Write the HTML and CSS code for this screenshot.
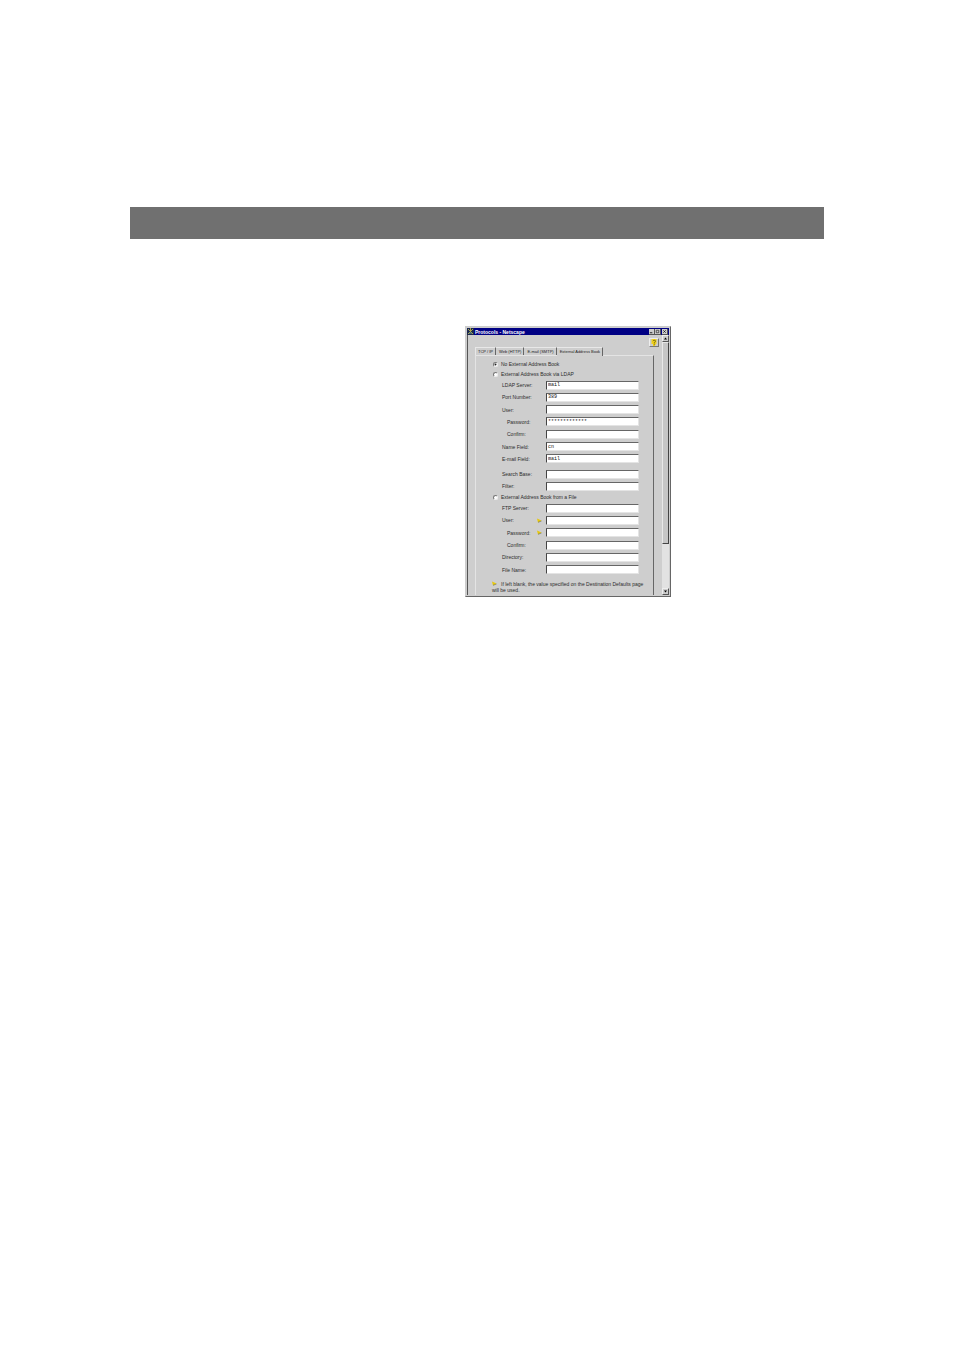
FILE: index.html
```html
<!DOCTYPE html>
<html lang="en">
<head>
<meta charset="utf-8">
<title>Protocols - Netscape</title>
<link rel="stylesheet" href="styles.css">
</head>
<body>
<main class="sheet">
  <div class="band"></div>
  <section class="window" aria-label="Protocols - Netscape">
    <header class="titlebar">
      <svg class="logo" viewBox="0 0 7 7" aria-hidden="true"><rect width="7" height="7" fill="#1c2850"/><path d="M1 1l5 5M6 1L1 6M3.5 0v3" stroke="#b5ae48" stroke-width=".9"/><path d="M2 5h3" stroke="#6fa08c"/></svg>
      <h1 class="title">Protocols - Netscape</h1>
      <button class="winbtn" type="button" aria-label="Minimize"><svg viewBox="0 0 6 6"><path d="M1 4.5h3" stroke="#000"/></svg></button>
      <button class="winbtn" type="button" aria-label="Maximize"><svg viewBox="0 0 6 6"><path d="M1.5 1.5h3v3h-3z" fill="none" stroke="#222" stroke-width=".8"/></svg></button>
      <button class="winbtn winbtn-close" type="button" aria-label="Close"><svg viewBox="0 0 6 6"><path d="M1.5 1.5l3 3M4.500 1.500l-3 3" stroke="#000" stroke-width=".8"/></svg></button>
    </header>
    <div class="content">
      <div class="page">
        <div class="tools">
          <button class="help" type="button" aria-label="Help"><svg viewBox="0 0 8 7"><path d="M1.500 0h5v4.500L4.500 7H3V5H1.500z" fill="#f2d21c"/><path d="M2.800 2q1-1.500 2.500-.5Q6 3 4.300 3.500v1M4.300 5.200v1" fill="none" stroke="#66600c" stroke-width=".8"/></svg></button>
        </div>
        <nav class="tabs">
          <a class="tab" href="#tcp">TCP / IP</a>
          <a class="tab" href="#web">Web (HTTP)</a>
          <a class="tab" href="#email">E-mail (SMTP)</a>
          <a class="tab tab-active" href="#book">External Address Book</a>
        </nav>
        <form class="panel" id="book">
          <label class="choice"><input class="radio" type="radio" name="source" checked>No External Address Book</label>
          <label class="choice"><input class="radio" type="radio" name="source">External Address Book via LDAP</label>
          <div class="group group-ldap">
            <div class="row"><label for="ldap">LDAP Server:</label><input class="field" id="ldap" value="mail"></div>
            <div class="row"><label for="port">Port Number:</label><input class="field" id="port" value="389"></div>
            <div class="row"><label for="user">User:</label><input class="field" id="user"></div>
            <div class="row"><label class="sub" for="pass">Password:</label><input class="field" id="pass" value="*************"></div>
            <div class="row"><label class="sub" for="conf">Confirm:</label><input class="field" id="conf"></div>
            <div class="row"><label for="name">Name Field:</label><input class="field" id="name" value="cn"></div>
            <div class="row"><label for="mail">E-mail Field:</label><input class="field" id="mail" value="mail"></div>
          </div>
          <div class="group group-search">
            <div class="row"><label for="base">Search Base:</label><input class="field" id="base"></div>
            <div class="row"><label for="filter">Filter:</label><input class="field" id="filter"></div>
          </div>
          <label class="choice"><input class="radio" type="radio" name="source">External Address Book from a File</label>
          <div class="group group-file">
            <div class="row"><label for="ftp">FTP Server:</label><input class="field" id="ftp"></div>
            <div class="row"><label for="fuser">User:</label><svg class="mark" viewBox="0 0 5 5" aria-hidden="true"><path d="M0 .5L4.500 2.500 1 4.500z" fill="#e8c808"/><path d="M1 4.300l3.500-1.300" stroke="#77775c" stroke-width=".7"/></svg><input class="field" id="fuser"></div>
            <div class="row"><label class="sub" for="fpass">Password:</label><svg class="mark" viewBox="0 0 5 5" aria-hidden="true"><path d="M0 .5L4.500 2.500 1 4.500z" fill="#e8c808"/><path d="M1 4.300l3.500-1.300" stroke="#77775c" stroke-width=".7"/></svg><input class="field" id="fpass"></div>
            <div class="row"><label class="sub" for="fconf">Confirm:</label><input class="field" id="fconf"></div>
            <div class="row"><label for="dir">Directory:</label><input class="field" id="dir"></div>
            <div class="row"><label for="file">File Name:</label><input class="field" id="file"></div>
          </div>
          <p class="note"><svg class="mark note-mark" viewBox="0 0 5 5" aria-hidden="true"><path d="M0 .5L4.500 2.500 1 4.500z" fill="#e8c808"/><path d="M1 4.300l3.500-1.300" stroke="#77775c" stroke-width=".7"/></svg>If left blank, the value specified on the Destination Defaults page<br>will be used.</p>
        </form>
      </div>
      <div class="scrollbar">
        <button class="arrow" type="button" aria-label="Scroll up"><svg viewBox="0 0 5 5"><path d="M1 3.500h3L2.500 1.500z"/></svg></button>
        <div class="track"><div class="thumb"></div></div>
        <button class="arrow" type="button" aria-label="Scroll down"><svg viewBox="0 0 5 5"><path d="M1 1.500h3L2.500 3.500z"/></svg></button>
      </div>
    </div>
  </section>
</main>
</body>
</html>
```
FILE: styles.css
```css
* { box-sizing: border-box; }

body {
  margin: 0;
  background: #fff;
  color: #2c2c2c;
  font-family: "Liberation Sans", Arial, sans-serif;
  font-size: 5px;
  line-height: 6px;
}

.sheet {
  min-height: 100vh;
  padding: 207px 130px 0;
}

.band {
  height: 32px;
  background: #707070;
}

.window {
  width: 206px;
  margin: 87px 0 0 335px;
  padding: 1px;
  border: 1px solid;
  border-color: #ccc #666 #666 #ccc;
  background: #cecece;
}

.titlebar {
  display: flex;
  align-items: center;
  height: 7px;
  padding-right: 1px;
  background: #000084;
}

.logo {
  width: 7px;
  height: 7px;
  margin-right: 1px;
}

.title {
  flex: 1;
  margin: 0;
  color: #fff;
  font-size: 5px;
  font-weight: bold;
}

.winbtn,
.arrow,
.help {
  display: block;
  padding: 0;
  border: 1px solid;
  border-color: #eee #555 #555 #eee;
  background: #ccc;
}

.winbtn {
  width: 6px;
  height: 6px;
  border-width: 0 1px 1px 0;
}

.winbtn-close { margin-left: 1px; }

.winbtn svg,
.arrow svg,
.help svg {
  display: block;
  width: 100%;
  height: 100%;
}

.content {
  display: flex;
  height: 260px;
  overflow: hidden;
  border-left: 1px solid #555;
}

.page {
  flex: 1;
  padding: 0 8px 0 7px;
}

.tools {
  display: flex;
  justify-content: flex-end;
  height: 12px;
  margin-right: -5px;
  padding-top: 3px;
}

.help {
  width: 10px;
  height: 9px;
  border-color: #eee #777 #777 #eee;
}

.tabs {
  display: flex;
  height: 8px;
  font-size: 4px;
  line-height: 8px;
}

.tab {
  padding: 0 2px 0 3px;
  border-top: 1px solid #e8e8e8;
  border-right: 1px solid #666;
  color: #222;
  text-align: center;
  text-decoration: none;
  white-space: nowrap;
}

.tab:first-child {
  padding-left: 2px;
  border-left: 1px solid #e8e8e8;
}

.tab-active {
  height: 9px;
  background: #cecece;
}

.panel {
  height: 241px;
  padding: 3px 14px 0 16px;
  border: solid;
  border-width: 1px 1px 0;
  border-color: #e4e4e4 #666 #666 #e4e4e4;
}

.choice {
  display: flex;
  align-items: center;
  height: 10px;
  gap: 3px;
  white-space: nowrap;
}

.radio {
  width: 5px;
  height: 5px;
  margin: 0 0 0 1px;
  border: 1px solid;
  border-color: #777 #eee #eee #777;
  border-radius: 50%;
  appearance: none;
  background: #fff;
}

.radio:checked { background: radial-gradient(#222 30%, #fff 60%); }

.group {
  display: grid;
  grid-auto-rows: 1fr;
  padding-left: 10px;
}

.group-ldap { height: 86px; }

.group-search {
  height: 24px;
  margin-top: 3px;
}

.group-file { height: 74px; }

.row {
  display: flex;
  align-items: center;
  white-space: nowrap;
}

.sub { padding-left: 5px; }

.field {
  width: 93px;
  height: 9px;
  margin-left: auto;
  padding: 0 1px;
  border: 1px solid;
  border-color: #666 #e4e4e4 #e4e4e4 #444;
  background: #fff;
  color: #111;
  font: 5px/6px "Liberation Mono", monospace;
}

.mark {
  width: 5px;
  height: 5px;
  margin-left: auto;
}

.mark + .field { margin-left: 4px; }

.note {
  margin: 5px -10px 0 0;
  white-space: nowrap;
}

.note-mark { margin: 0 4px 0 0; }

.scrollbar {
  display: flex;
  flex-direction: column;
  width: 7px;
}

.arrow {
  width: 7px;
  height: 7px;
}

.track {
  flex: 1;
  background: #e2e2e2;
}

.thumb {
  height: 82%;
  border: 1px solid;
  border-color: #e8e8e8 #444 #444 #e8e8e8;
  background: #c6c6c6;
}
```
